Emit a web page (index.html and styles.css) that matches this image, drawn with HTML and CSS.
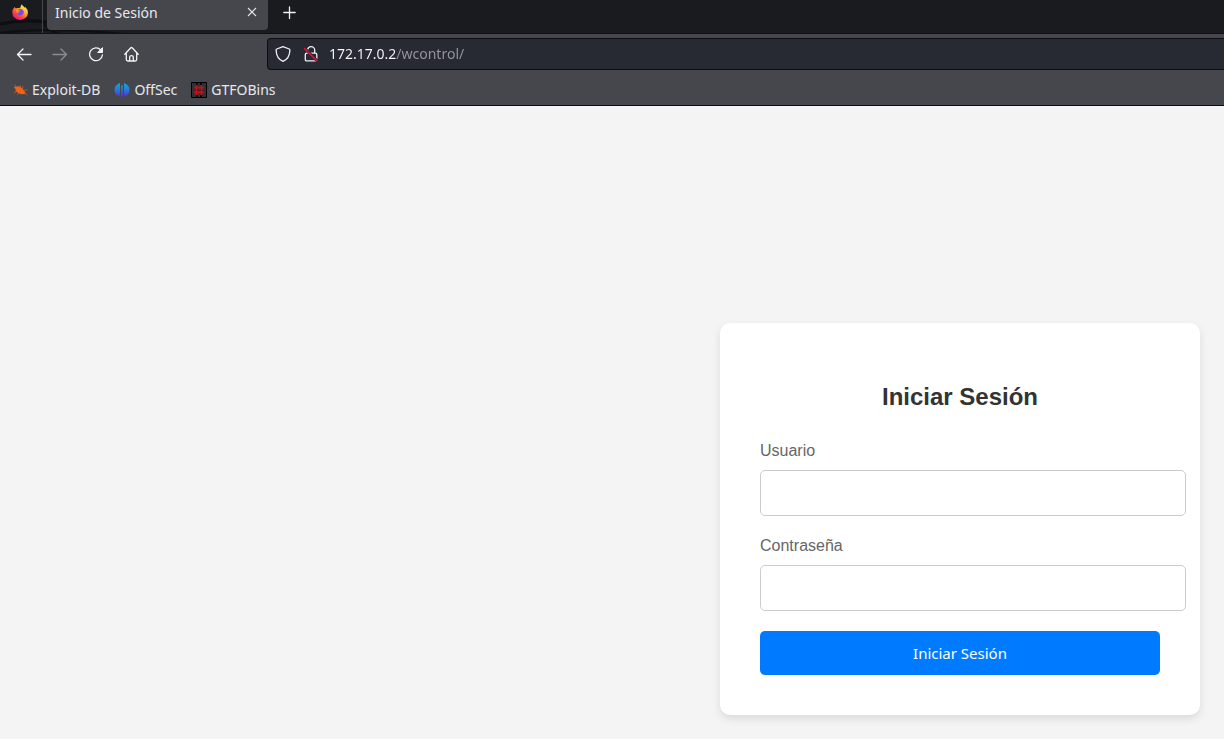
FILE: index.html
```html
<!DOCTYPE html>
<html lang="es">
<head>
<meta charset="utf-8">
<meta name="viewport" content="width=device-width, initial-scale=1">
<title>Inicio de Sesión</title>
<link rel="stylesheet" href="styles.css">
</head>
<body>
<header class="browser">
  <div class="tabstrip">
    <svg class="swirl" width="270" height="33" viewBox="0 0 270 33" fill="none" stroke="#0e0f13" aria-hidden="true"><path d="M0 24Q22 19 47 22" stroke-width="3"/><path d="M0 33Q60 26 140 36M44 23Q47 31 60 34" stroke-width="2"/></svg>
    <button class="firefox" type="button" aria-label="Firefox View">
      <svg width="16" height="16" viewBox="0 0 16 16">
        <defs>
          <linearGradient id="flame" x1=".85" y1=".05" x2=".2" y2=".95"><stop offset="0" stop-color="#fff44f"/><stop offset=".35" stop-color="#ffb52e"/><stop offset=".65" stop-color="#ff5038"/><stop offset="1" stop-color="#e8137d"/></linearGradient>
        </defs>
        <path d="M2.6 3L3.8 4.4Q5 3.9 6 4L8.3 3.7Q8.7 1.5 9.8.2Q10.6 1.8 12 2.8L12.7 3.8L13.3 3Q15.9 5.3 15.9 8.7A7.8 7.3 0 0 1 .3 8.7Q.1 5.4 2.6 3Z" fill="url(#flame)"/>
        <path d="M5.5 5.2Q8.8 3.7 11.2 6.2Q12.7 9 10.3 10.8Q7.4 12.4 5.2 10Q4.4 8.6 5.4 7.5Z" fill="#8048e8"/>
        <path d="M3.8 4.5Q5 5 5.6 5.3L7.5 6Q8.5 6.6 7.8 7.2L6.2 7.8Q6 8.6 7 9Q5.6 9.6 4.8 8.8Q3.5 7 3.8 4.5Z" fill="#ff8f2a"/>
      </svg>
    </button>
    <div class="tab">
      <span class="tab-title">Inicio de Sesión</span>
      <button class="tab-close" type="button" aria-label="Cerrar pestaña"><svg width="10" height="10" viewBox="0 0 10 10" fill="none" stroke="#e4e4e8" stroke-width="1.1"><path d="M1 1L9 9M9 1L1 9"/></svg></button>
    </div>
    <button class="tab-new" type="button" aria-label="Nueva pestaña"><svg width="14" height="14" viewBox="0 0 14 14" fill="none" stroke="#f0f0f4" stroke-width="1.3" stroke-linecap="round"><path d="M6.5 1V12.500M.8 6.500H12.200"/></svg></button>
  </div>
  <div class="navbar">
    <div class="nav-buttons">
      <button class="nav-button" type="button" aria-label="Atrás"><svg width="16" height="16" viewBox="0 0 16 16"><path d="M15 8.500H1.500M7 3L1.500 8.500L7 14"/></svg></button>
      <button class="nav-button" type="button" aria-label="Adelante" disabled><svg width="16" height="16" viewBox="0 0 16 16"><path d="M1 8.500H14.500M9 3L14.500 8.500L9 14"/></svg></button>
      <button class="nav-button" type="button" aria-label="Recargar"><svg width="16" height="16" viewBox="0 0 16 16"><path d="M12.800 4A6.400 6.400 0 1 0 14.400 9"/><path d="M14.500 2V6.500H10Z" fill="#f4f4f6" stroke-width="1"/></svg></button>
      <button class="nav-button" type="button" aria-label="Inicio"><svg width="16" height="16" viewBox="0 0 16 16"><path d="M.8 8.300L6.600 2Q7.500 1 8.400 2L14.200 8.300M2.300 7.200V13.500Q2.300 15 3.800 15H11.200Q12.700 15 12.700 13.500V7.200M5.700 14.800V11Q5.700 9.700 7.500 9.700Q9.300 9.700 9.300 11V14.800"/></svg></button>
    </div>
    <div class="urlbar">
      <svg width="16" height="16" viewBox="0 0 16 16" fill="none" stroke="#f0f0f4" stroke-width="1.3" stroke-linejoin="round" aria-hidden="true"><path d="M8 .7L14.2 3Q15 3.3 14.9 4.2C14.7 9.3 13 13.3 8 15.3C3 13.3 1.3 9.3 1.1 4.2Q1 3.3 1.8 3Z"/></svg>
      <svg width="16" height="16" viewBox="0 0 16 16" fill="none" aria-hidden="true"><path d="M4.500 7V4.300A3.600 3.600 0 0 1 11.700 4.300V7M3.400 7.200H12.400Q13.800 7.200 13.800 8.600V13.400Q13.800 14.900 12.400 14.900H3.800Q2.300 14.900 2.300 13.400V8.600Q2.300 7.200 3.800 7.200" stroke="#f0f0f4" stroke-width="1.3"/><path d="M1.300 2L14.600 15.300" stroke="#272933" stroke-width="3"/><path d="M1 2L14.300 15.300" stroke="#e6103c" stroke-width="1.5"/></svg>
      <input class="url-input" type="text" aria-label="Dirección" value="172.17.0.2/wcontrol/">
    </div>
  </div>
  <nav class="bookmarks" aria-label="Marcadores">
    <a class="bookmark" href="#exploit-db">
      <svg width="16" height="16" viewBox="0 0 16 16" fill="#f06318" aria-hidden="true"><path d="M1.5 4.700L4 4.700Q6 3.600 8.600 5.200Q11.500 6.700 12.200 9Q13.700 10 13.400 11.700L11.400 12Q9 12.600 6.200 11Q3.700 9.300 3.100 6.600Z"/><path d="M3 9L6 8.800M1.800 11L5.200 9.500M5 13L7 11M8 3L9 6M11 4L10.400 7.300M12 8.300L15.500 7.800M12.800 11L15 13.500M4 4.800L3 2.700" stroke="#f06318" stroke-width=".6"/></svg>
      Exploit-DB</a>
    <a class="bookmark" href="#offsec">
      <svg width="16" height="16" viewBox="0 0 16 16" fill="url(#offsec-blue)" aria-hidden="true"><defs><linearGradient id="offsec-blue" gradientUnits="userSpaceOnUse" x1="0" y1="1" x2="0" y2="15"><stop offset="0" stop-color="#10acc8"/><stop offset=".5" stop-color="#2878dc"/><stop offset="1" stop-color="#6128d0"/></linearGradient></defs><path d="M6 1V13.500L4.500 14Q.5 12.200.5 7.700T6 1ZM7.200 4Q8 2 8.800 4V15.300H7.200ZM10 1Q15.500 3.200 15.500 7.700T11.500 14L10 13.500Z"/></svg>
      OffSec</a>
    <a class="bookmark" href="#gtfobins">
      <svg width="16" height="16" viewBox="0 0 16 16" fill="none" aria-hidden="true"><path d="M.5.5H15.5V15.5H.5Z" fill="#303036" stroke="#000"/><path d="M6 1V15M10 1V15" stroke="#000" stroke-width="1.5" stroke-dasharray="2 1"/><path d="M5.700 3V13M10.300 3V13M3 5.700H13M3 10.300H13" stroke="#c51117" stroke-width="1.7"/></svg>
      GTFOBins</a>
  </nav>
</header>
<main class="page">
  <form class="login" action="#" method="post">
    <h2 class="login-title">Iniciar Sesión</h2>
    <label class="login-label" for="usuario">Usuario</label>
    <input class="login-input" id="usuario" name="usuario" type="text">
    <label class="login-label" for="contrasena">Contraseña</label>
    <input class="login-input" id="contrasena" name="contrasena" type="password">
    <button class="login-submit" type="submit">Iniciar Sesión</button>
  </form>
</main>
</body>
</html>
```

FILE: styles.css
```css
body {
  margin: 0;
  min-height: 100vh;
  display: flex;
  flex-direction: column;
  background: #f4f4f4;
  font-family: "Liberation Sans", Arial, sans-serif;
}

button {
  border: 0;
  padding: 0;
  background: none;
  font: inherit;
}

svg {
  display: block;
  flex: none;
}

.browser {
  background: #45474d;
  border-bottom: 1px solid #0c0c12;
  color: #e8e8ec;
  font: 14px/20px "Noto Sans", sans-serif;
}

/* Tab strip */
.tabstrip {
  position: relative;
  display: flex;
  height: 33px;
  background: #1a1b1f;
  border-bottom: 1px solid #101116;
}

.swirl {
  position: absolute;
  left: 0;
  top: 0;
}

.firefox {
  position: relative;
  box-sizing: border-box;
  width: 43px;
  padding: 4px 0 0 12px;
  display: flex;
  align-items: flex-start;
  border-right: 1px solid #45464a;
}

.tab {
  position: relative;
  box-sizing: border-box;
  display: flex;
  justify-content: space-between;
  width: 221px;
  height: 30px;
  margin-left: 4px;
  padding: 3px 11px 0 8px;
  background: #45474d;
  border-radius: 0 0 4px 4px;
}

.tab-close {
  height: 18px;
}

.tab-new {
  height: 26px;
  margin-left: 15px;
}

/* Navigation */
.navbar {
  display: flex;
  align-items: center;
  padding: 4px 0;
}

.nav-buttons {
  display: flex;
  gap: 20px;
  padding: 0 127px 0 16px;
}

.nav-button svg {
  fill: none;
  stroke: #f4f4f6;
  stroke-width: 1.3;
  stroke-linecap: round;
  stroke-linejoin: round;
}

.nav-button:disabled {
  opacity: 0.4;
}

.urlbar {
  box-sizing: border-box;
  flex: 1;
  display: flex;
  align-items: center;
  gap: 12px;
  height: 32px;
  padding-left: 7px;
  background: #272933;
  border: 1px solid #0c0d12;
  border-right: 0;
  border-radius: 4px 0 0 4px;
}

.url-input {
  flex: 1;
  min-width: 0;
  padding: 0;
  margin-left: -2px;
  border: 0;
  outline: 0;
  font: 14px/22px "Noto Sans", sans-serif;
  color: transparent;
  caret-color: #fff;
  background: linear-gradient(90deg, #fbfbfe 67px, #96979f 67px) text;
}

/* Bookmarks */
.bookmarks {
  display: flex;
  gap: 14px;
  padding: 6px 12px 5px;
}

.bookmark {
  display: flex;
  align-items: center;
  gap: 4px;
  color: inherit;
  text-decoration: none;
}

/* Login page */
.page {
  flex: 1;
  display: flex;
  justify-content: flex-end;
  align-items: flex-end;
  padding: 24px;
}

.login {
  width: 400px;
  padding: 40px;
  background: #fff;
  border-radius: 10px;
  box-shadow: 0 4px 8px rgba(0, 0, 0, 0.1);
}

.login-title {
  margin: 20px 0 30px;
  color: #333;
  font-size: 24px;
  line-height: 28px;
  text-align: center;
}

.login-label {
  display: block;
  margin-bottom: 10px;
  color: #666;
  font-size: 16px;
  line-height: 19px;
}

.login-input {
  display: block;
  width: 100%;
  height: 20px;
  margin: 0 0 20px;
  padding: 12px;
  border: 1px solid #ccc;
  border-radius: 5px;
  background: #fff;
  font-size: 16px;
}

.login-submit {
  display: block;
  width: 100%;
  padding: 11px 12px;
  border-radius: 5px;
  background: #007bff;
  color: #fff;
  font: 15px/22px "Noto Sans", sans-serif;
  cursor: pointer;
}
```
